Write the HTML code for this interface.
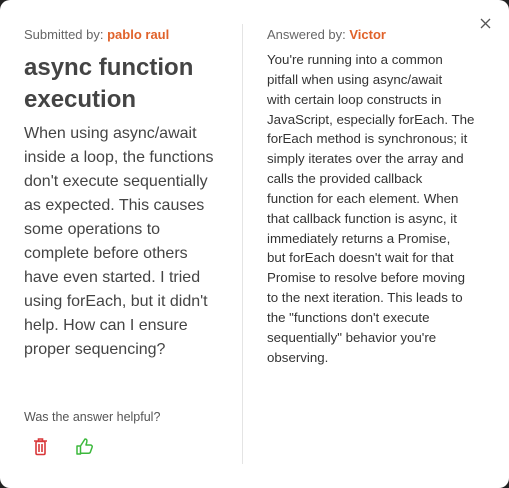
<!DOCTYPE html>
<html><head><style>
html,body{margin:0;padding:0;background:#222;}
body{width:509px;height:488px;overflow:hidden;font-family:"Liberation Sans",sans-serif;}
.card{position:absolute;left:0;top:0;width:509px;height:488px;background:#fff;border-radius:10px;}
.close{position:absolute;left:480px;top:18px;}
.div{position:absolute;left:242px;top:24px;width:1px;height:440px;background:#e4e4e4;}
.left{position:absolute;left:24px;top:26px;white-space:nowrap;}
.right{position:absolute;left:267px;top:26px;white-space:nowrap;}
.meta{font-size:13px;color:#666;line-height:18px;}
.meta b{color:#e0622a;}
h1{margin:8px 0 0;font-size:24px;line-height:32px;color:#444;font-weight:bold;}
.q{margin-top:6px;font-size:16px;line-height:24px;color:#444;}
.a{margin-top:6px;font-size:13.3px;line-height:19.85px;color:#333;}
.help{position:absolute;left:24px;top:410px;font-size:12.5px;color:#555;}
.icons{position:absolute;left:30px;top:436px;}
</style></head><body>
<div class="card">
<svg class="close" width="11" height="11" viewBox="0 0 11 11"><path d="M1 1L10 10M10 1L1 10" stroke="#555" stroke-width="1.3"/></svg>
<div class="div"></div>
<div class="left">
<div class="meta">Submitted by: <b>pablo raul</b></div>
<h1>async function<br>execution</h1>
<div class="q">When using async/await<br>inside a loop, the functions<br>don't execute sequentially<br>as expected. This causes<br>some operations to<br>complete before others<br>have even started. I tried<br>using forEach, but it didn't<br>help. How can I ensure<br>proper sequencing?</div>
</div>
<div class="right">
<div class="meta">Answered by: <b>Victor</b></div>
<div class="a">You're running into a common<br>pitfall when using async/await<br>with certain loop constructs in<br>JavaScript, especially forEach. The<br>forEach method is synchronous; it<br>simply iterates over the array and<br>calls the provided callback<br>function for each element. When<br>that callback function is async, it<br>immediately returns a Promise,<br>but forEach doesn't wait for that<br>Promise to resolve before moving<br>to the next iteration. This leads to<br>the "functions don't execute<br>sequentially" behavior you're<br>observing.</div>
</div>
<div class="help">Was the answer helpful?</div>
<svg class="icons" width="70" height="22" viewBox="0 0 70 22">
<g fill="none" stroke="#d9383a" stroke-width="1.6">
<path d="M4 5h13M8.5 5V3h4v2"/><rect x="6" y="5.5" width="9" height="13" rx="1.2"/><path d="M9 8v8M12 8v8"/>
</g>
<g fill="none" stroke="#3cb83c" stroke-width="1.5" stroke-linejoin="round">
<path d="M47 10h3.5v8H47zM50.5 10l4.5-7c1.6 0 2.3 1 1.8 3l-0.8 3h4.5c1.2 0 2 1 1.6 2.2l-1.8 5c-.3 .8-1 1-1.8 1h-8"/>
</g>
</svg>
</div>
</body></html>
